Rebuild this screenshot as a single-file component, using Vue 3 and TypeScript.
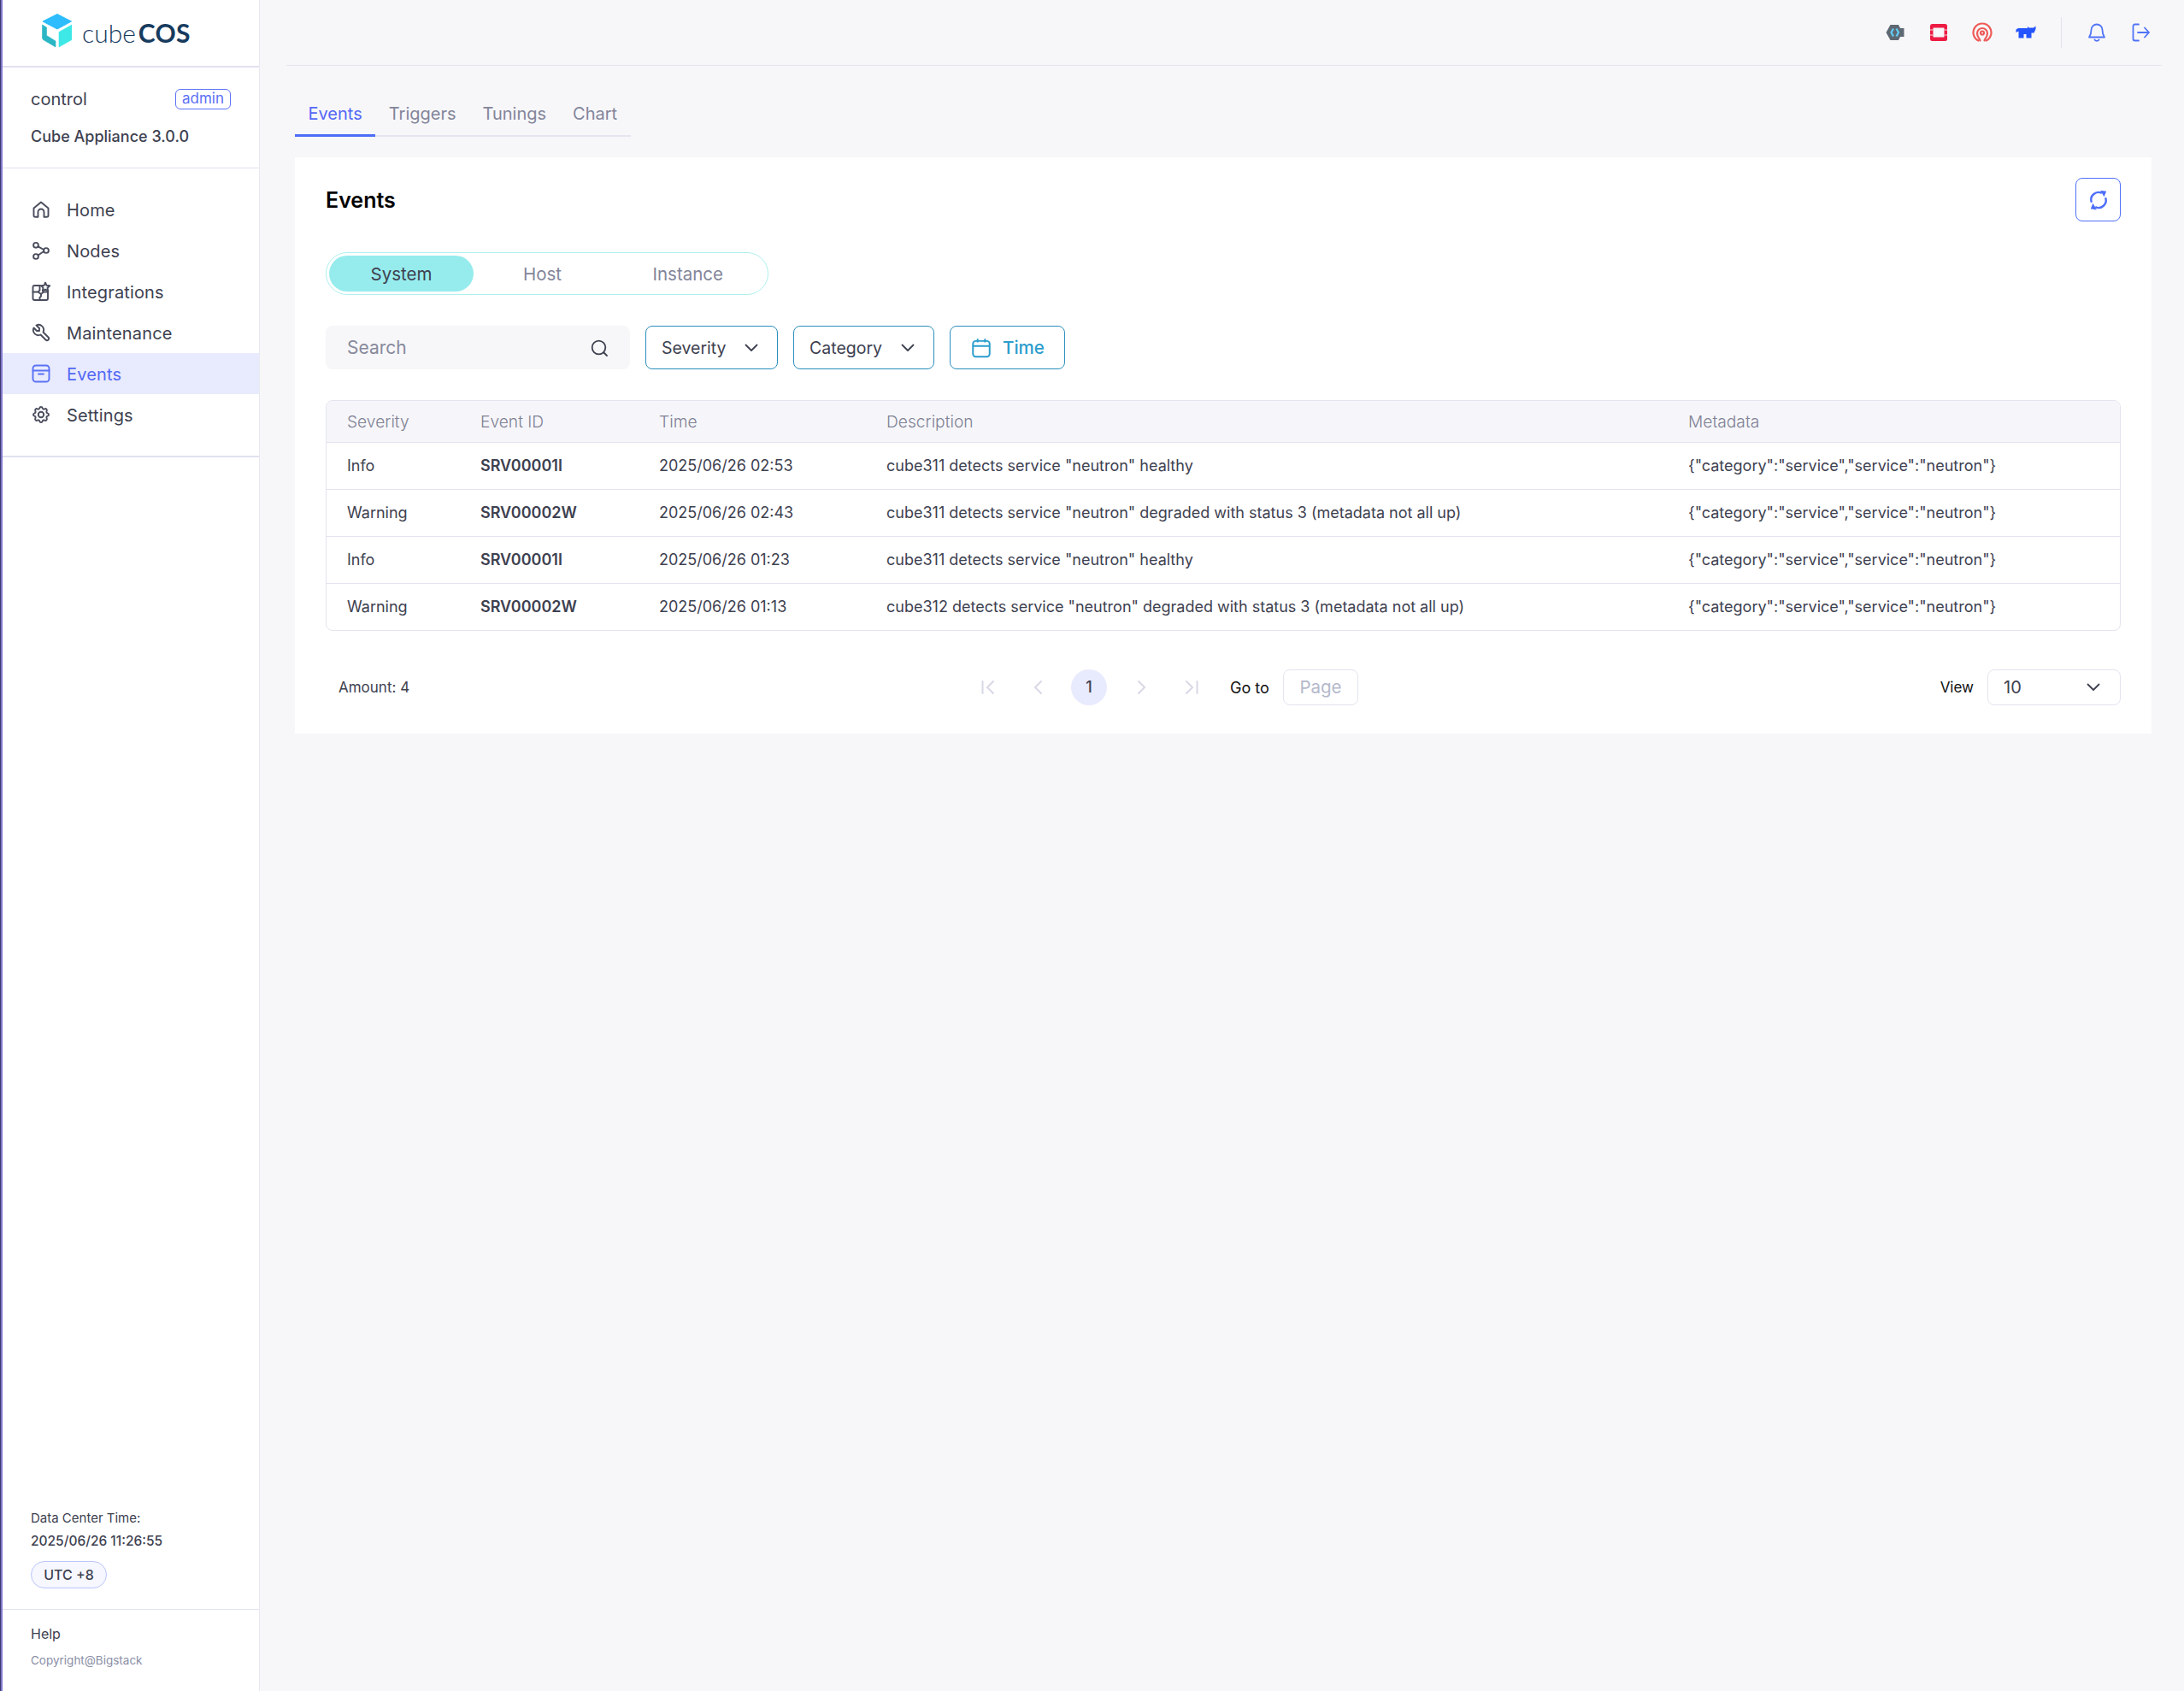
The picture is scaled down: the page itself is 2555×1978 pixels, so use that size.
<script setup lang="ts">
interface Row { severity: string; id: string; time: string; description: string }
const navItems = ['Home', 'Nodes', 'Integrations', 'Maintenance', 'Events', 'Settings']
const tabs = ['Events', 'Triggers', 'Tunings', 'Chart']
const segments = ['System', 'Host', 'Instance']
const metadata = '{"category":"service","service":"neutron"}'
const rows: Row[] = [
  { severity: 'Info', id: 'SRV00001I', time: '2025/06/26 02:53', description: 'cube311 detects service "neutron" healthy' },
  { severity: 'Warning', id: 'SRV00002W', time: '2025/06/26 02:43', description: 'cube311 detects service "neutron" degraded with status 3 (metadata not all up)' },
  { severity: 'Info', id: 'SRV00001I', time: '2025/06/26 01:23', description: 'cube311 detects service "neutron" healthy' },
  { severity: 'Warning', id: 'SRV00002W', time: '2025/06/26 01:13', description: 'cube312 detects service "neutron" degraded with status 3 (metadata not all up)' },
]
</script>

<template>
  <div class="shell">
    <aside class="sidebar">
      <div class="logo">
        <svg class="cube" viewBox="49 17 35 39" width="35" height="39">
          <path d="M67 17.500 83.500 26 67 35 50 26Z" fill="#2dbcfe" stroke="#2dbcfe" stroke-linejoin="round" />
          <path d="M49.500 30 54.500 33V42.500L65 49V56L50.500 47.500 49.500 46Z" fill="#2bb6c4" stroke="#2bb6c4" stroke-width=".6" stroke-linejoin="round" />
          <path d="M84 30 69 38.500V56L84 47.500Z" fill="#3de8e6" stroke="#3de8e6" stroke-width=".6" stroke-linejoin="round" />
        </svg>
        <span class="brand"><span class="brand-light">cube</span><span class="brand-bold">COS</span></span>
      </div>

      <div class="user">
        <div class="user-row">
          <span class="user-name">control</span>
          <span class="badge">admin</span>
        </div>
        <div class="version">Cube Appliance 3.0.0</div>
      </div>

      <nav class="nav">
        <a v-for="item in navItems" :key="item" class="nav-item" :class="{ active: item === 'Events' }">
          <svg class="nav-icon" viewBox="0 0 24 24">
            <template v-if="item === 'Home'">
              <path d="M3.500 10.500 12 3.500l8.500 7V19a1.800 1.800 0 0 1-1.800 1.800h-3.200V15a3.500 3.500 0 0 0-7 0v5.800H5.300A1.800 1.800 0 0 1 3.500 19Z" />
            </template>
            <template v-else-if="item === 'Nodes'">
              <circle cx="6" cy="5.800" r="2.900" /><circle cx="18" cy="12" r="2.900" /><circle cx="6" cy="19" r="2.900" />
              <path d="M8.600 7.300 15.200 11M15.300 13 8.600 17.500" />
            </template>
            <template v-else-if="item === 'Integrations'">
              <path d="M11 5H4.500a2 2 0 0 0-2 2v13a2 2 0 0 0 2 2H18a2 2 0 0 0 2-2v-7" />
              <path d="M10.500 5v5.500l-2 2H2.500M8.500 12.500l3.500 2.500v2.500l-1.500 1.500v3M12 15l3-2.500h5" />
              <path d="m17 1.500 1.500 3.300 3.700.4-2.700 2.500.7 3.600-3.200-1.800-3.200 1.800.7-3.600L12 5.200l3.600-.4Z" />
            </template>
            <template v-else-if="item === 'Maintenance'">
              <path d="M7 10h3V7L6.500 3.500a6 6 0 0 1 8 8l6 6a2 2 0 0 1-3 3l-6-6a6 6 0 0 1-8-8L7 10" />
            </template>
            <template v-else-if="item === 'Events'">
              <rect x="2.500" y="2.500" width="19" height="19" rx="3.500" />
              <path d="M2.500 8.500h19M9 12.500h6" />
            </template>
            <template v-else>
              <path d="M10.325 4.317c.426-1.756 2.924-1.756 3.350 0a1.724 1.724 0 0 0 2.573 1.066c1.543-.94 3.310.826 2.370 2.370a1.724 1.724 0 0 0 1.065 2.572c1.756.426 1.756 2.924 0 3.350a1.724 1.724 0 0 0-1.066 2.573c.94 1.543-.826 3.310-2.370 2.370a1.724 1.724 0 0 0-2.572 1.065c-.426 1.756-2.924 1.756-3.350 0a1.724 1.724 0 0 0-2.573-1.066c-1.543.94-3.310-.826-2.370-2.370a1.724 1.724 0 0 0-1.065-2.572c-1.756-.426-1.756-2.924 0-3.350a1.724 1.724 0 0 0 1.066-2.573c-.94-1.543.826-3.310 2.370-2.370 1 .608 2.296.07 2.572-1.065Z" />
              <circle cx="12" cy="12" r="3.200" />
            </template>
          </svg>
          <span class="nav-label">{{ item }}</span>
        </a>
      </nav>

      <div class="spacer"></div>

      <div class="clock">
        <div class="clock-label">Data Center Time:</div>
        <div class="clock-value">2025/06/26 11:26:55</div>
        <span class="utc">UTC +8</span>
      </div>
      <div class="help">
        <div class="help-link">Help</div>
        <div class="copyright">Copyright@Bigstack</div>
      </div>
    </aside>

    <main class="main">
      <header class="topbar">
        <div class="top-icons">
          <svg class="top-icon" viewBox="0 0 24 24">
            <path d="M1.500 12 6.500 3h9.500L18 7h4.500v10H18l-2 4H6.500Z" fill="#5e6872" />
            <path d="M10 7.500 7.500 12l2.500 4.500M13.500 7.500 16 12l-2.500 4.500" fill="none" stroke="#62ccf6" stroke-width="2.200" />
          </svg>
          <svg class="top-icon" viewBox="0 0 24 24">
            <rect x="2" y="2" width="20" height="20" rx="2.500" fill="#ed1c44" />
            <rect x="5.500" y="6.500" width="13" height="11" rx=".5" fill="#f7f7f9" />
            <path d="M2 9h3.500M2 15h3.500M18.500 9H22M18.500 15H22" stroke="#f9d5dc" stroke-width="1.200" />
          </svg>
          <svg class="top-icon" viewBox="0 0 24 24" fill="none" stroke="#ee5a58" stroke-width="2.200" stroke-linecap="round">
            <path d="M7.500 21.500a10.500 10.500 0 1 1 9 0" />
            <path d="M9.500 21.500c0-2-3.500-3.500-3.500-8.500a6 6 0 0 1 12 0c0 5-3.500 6.500-3.500 8.500" />
            <circle cx="12" cy="12.500" r="2" />
          </svg>
          <svg class="top-icon" viewBox="0 -4 24 24">
            <path d="M.500 4.500 3 3H14V.800L15.500 2.500H21L23.500.500V4L21.500 8.500H18.500V14.500H12.500V10H9.500V14.500H3.500V6.500L.500 8Z" fill="#2453ff" />
          </svg>
        </div>
        <span class="top-divider"></span>
        <div class="top-icons">
          <svg class="top-icon line" viewBox="0 0 24 24">
            <path d="M12 2.500a6.500 6.500 0 0 1 6.500 6.500c0 5 1 6.500 2.500 8.500H3c1.500-2 2.500-3.500 2.500-8.500A6.500 6.500 0 0 1 12 2.500Z" />
            <path d="M9.500 20.500a3 3 0 0 0 5 0" />
          </svg>
          <svg class="top-icon line" viewBox="0 0 24 24">
            <path d="M10 2.500H5.500a2 2 0 0 0-2 2v15a2 2 0 0 0 2 2H10M9 12h13M17 6.500l5 5.500-5 5.500" />
          </svg>
        </div>
      </header>

      <div class="content">
        <div class="tabs">
          <span v-for="tab in tabs" :key="tab" class="tab" :class="{ active: tab === 'Events' }">{{ tab }}</span>
        </div>

        <section class="card">
          <div class="card-head">
            <h1 class="title">Events</h1>
            <button class="refresh">
              <svg viewBox="0 0 24 24" width="26" height="26">
                <path d="M4.500 14.500A8 8 0 0 1 15.500 4.500M19.500 9.500A8 8 0 0 1 8.500 19.500" fill="none" stroke="#4d6ef8" stroke-width="2.200" />
                <path d="M14 1.500 20.500 2.500 18 8.500ZM10 22.500 3.500 21.500 6 15.500Z" fill="#4d6ef8" />
              </svg>
            </button>
          </div>

          <div class="segmented">
            <span v-for="seg in segments" :key="seg" class="segment" :class="{ active: seg === 'System' }">{{ seg }}</span>
          </div>

          <div class="filters">
            <div class="search">
              <span class="search-text">Search</span>
              <svg viewBox="0 0 24 24" width="24" height="24" fill="none" stroke="#3d4150" stroke-width="1.800" stroke-linecap="round">
                <circle cx="11.500" cy="11.500" r="7.800" /><path d="m17.500 17.500 3.500 3.500" />
              </svg>
            </div>
            <button class="filter severity">
              <span>Severity</span>
              <svg class="chev" viewBox="0 0 16 10"><path d="M1.500 1.500 8 8l6.500-6.500" /></svg>
            </button>
            <button class="filter category">
              <span>Category</span>
              <svg class="chev" viewBox="0 0 16 10"><path d="M1.500 1.500 8 8l6.500-6.500" /></svg>
            </button>
            <button class="filter time">
              <svg class="cal" viewBox="0 0 24 24" width="26" height="26" fill="none" stroke="#2b9dcd" stroke-width="1.800">
                <rect x="3" y="4.500" width="18" height="17" rx="3" /><path d="M3 10h18M8 2v4M16 2v4" />
              </svg>
              <span>Time</span>
            </button>
          </div>

          <div class="table">
            <div class="tr th">
              <span>Severity</span><span>Event ID</span><span>Time</span><span>Description</span><span>Metadata</span>
            </div>
            <div v-for="(row, i) in rows" :key="i" class="tr td">
              <span>{{ row.severity }}</span>
              <span class="strong">{{ row.id }}</span>
              <span>{{ row.time }}</span>
              <span>{{ row.description }}</span>
              <span>{{ metadata }}</span>
            </div>
          </div>

          <div class="pager">
            <span class="amount">Amount: 4</span>
            <div class="pages">
              <svg class="pg pg-first" viewBox="0 0 16 18"><path d="M1.500 2v14M14 2 7 9l7 7" /></svg>
              <svg class="pg pg-prev" viewBox="0 0 10 18"><path d="M9 2 2 9l7 7" /></svg>
              <span class="page-no">1</span>
              <svg class="pg pg-next" viewBox="0 0 10 18"><path d="m1 2 7 7-7 7" /></svg>
              <svg class="pg pg-last" viewBox="0 0 16 18"><path d="M14.500 2v14M2 2l7 7-7 7" /></svg>
              <span class="goto">Go to</span>
              <span class="page-input">Page</span>
            </div>
            <div class="view">
              <span class="view-label">View</span>
              <div class="view-select">
                <span>10</span>
                <svg class="chev" viewBox="0 0 16 10"><path d="M1.500 1.500 8 8l6.500-6.500" /></svg>
              </div>
            </div>
          </div>
        </section>
      </div>
    </main>
  </div>
</template>

<style>
html, body { margin: 0; background: #f7f7f9; }
</style>

<style scoped>
.shell {
  display: flex;
  min-height: 1978px;
  background: #f7f7f9;
  font-family: Inter, "Noto Sans", sans-serif;
  color: #3e4150;
}

/* sidebar */
.sidebar {
  box-sizing: border-box;
  width: 304px;
  flex: none;
  display: flex;
  flex-direction: column;
  background: #fff;
  border-left: 1px solid #3c3a6e;
  border-right: 1px solid #e8e8f0;
  padding-left: 2px;
  box-shadow: inset 2px 0 0 #8278cc;
}
.logo {
  box-sizing: border-box;
  height: 79px;
  display: flex;
  align-items: center;
  gap: 12px;
  padding: 0 0 6px 46px;
  border-bottom: 2px solid #e1e2f0;
}
.cube { flex: none; }
.brand { font-family: Lato, sans-serif; font-size: 30px; color: #173b5e; line-height: 1; margin-top: 4px; }
.brand-light { font-weight: 300; margin-right: 3px; }
.brand-bold { font-weight: 700; letter-spacing: .3px; }

.user {
  box-sizing: border-box;
  height: 118px;
  padding: 25px 33px 0 33px;
  border-bottom: 1px solid #e1e2f0;
}
.user-row { display: flex; align-items: center; justify-content: space-between; height: 24px; }
.user-name { font-size: 20px; font-weight: 400; line-height: 26px; }
.badge {
  box-sizing: border-box;
  height: 24px;
  line-height: 21px;
  padding: 0 7px;
  border: 1px solid #5b72f5;
  border-radius: 6px;
  font-size: 17px;
  color: #5b6ff6;
}
.version { margin-top: 20px; font-size: 18px; font-weight: 500; line-height: 24px; }

.nav { padding: 24px 0; border-bottom: 2px solid #e1e2f0; }
.nav-item {
  display: flex;
  align-items: center;
  height: 48px;
  padding-left: 33px;
  gap: 18px;
  font-size: 20px;
}
.nav-label { padding-top: 1px; letter-spacing: .15px; }
.nav-icon {
  width: 24px;
  height: 24px;
  fill: none;
  stroke: #494c5c;
  stroke-width: 1.900;
  stroke-linecap: round;
  stroke-linejoin: round;
}
.nav-item.active { background: #e8eafd; color: #5468f5; }
.nav-item.active .nav-icon { stroke: #5a72f6; }
.spacer { flex: 1; }

.clock { padding: 0 33px 24px; border-bottom: 1px solid #e1e2f0; }
.clock-label { font-size: 15px; line-height: 25px; }
.clock-value { margin-top: 3px; font-size: 15.500px; font-weight: 500; line-height: 24px; }
.utc {
  box-sizing: border-box;
  display: inline-block;
  margin-top: 11px;
  width: 89px;
  height: 32px;
  line-height: 30px;
  text-align: center;
  border: 1px solid #bcc6fa;
  border-radius: 16px;
  background: #f6f7ff;
  font-size: 16px;
  font-weight: 500;
  vertical-align: top;
}
.help { padding: 16px 33px 0; height: 95px; box-sizing: border-box; }
.help-link { font-size: 16px; line-height: 24px; }
.copyright { margin-top: 8px; font-size: 13.500px; line-height: 22px; color: #8b8fa6; }

/* main */
.main { flex: 1; min-width: 0; }
.topbar {
  box-sizing: border-box;
  height: 77px;
  margin: 0 26px 0 31px;
  padding-right: 13px;
  display: flex;
  justify-content: flex-end;
  align-items: center;
  gap: 29px;
  border-bottom: 1px solid #e5e5f1;
}
.top-icons { display: flex; align-items: center; gap: 27px; }
.top-icon { width: 24px; height: 24px; display: block; }
.top-icon.line {
  fill: none;
  stroke: #5073f7;
  stroke-width: 1.800;
  stroke-linecap: round;
  stroke-linejoin: round;
}
.top-divider { width: 1px; height: 36px; background: #e3e3ec; }

.content { padding: 29px 38px 0 41px; }
.tabs { display: inline-flex; vertical-align: top; border-bottom: 2px solid #e5e5f1; }
.tab {
  box-sizing: border-box;
  height: 54px;
  padding: 0 15.500px;
  margin-bottom: -2px;
  line-height: 54px;
  font-size: 20px;
  color: #83859a;
  border-bottom: 3px solid transparent;
}
.tab.active { color: #5468f5; border-bottom-color: #4d6cf8; }

.card {
  margin-top: 24px;
  padding: 24px 36px 33px;
  background: #fff;
}
.card-head { display: flex; justify-content: space-between; align-items: center; }
.title { margin: 0; font-size: 25px; font-weight: 600; color: #000; }
.refresh {
  box-sizing: border-box;
  width: 53px;
  height: 51px;
  display: flex;
  align-items: center;
  justify-content: center;
  padding: 0;
  background: #fff;
  border: 1px solid #4f70f8;
  border-radius: 8px;
}

.segmented {
  box-sizing: border-box;
  display: flex;
  gap: 9.500px;
  width: 518px;
  height: 50px;
  margin-top: 36px;
  padding: 3px;
  border: 1px solid #aef0ee;
  border-radius: 25px;
}
.segment {
  padding: 0 48.500px;
  line-height: 43px;
  text-align: center;
  font-size: 20.500px;
  color: #83859a;
  border-radius: 21px;
}
.segment.active { background: #96eced; color: #3e4150; }

.filters { display: flex; gap: 18px; margin-top: 36px; height: 51px; }
.search {
  box-sizing: border-box;
  width: 356px;
  display: flex;
  align-items: center;
  justify-content: space-between;
  padding: 0 24px 0 25px;
  background: #f7f7f9;
  border-radius: 8px;
}
.search-text { font-size: 21px; color: #878a9c; }
.filter {
  box-sizing: border-box;
  display: flex;
  align-items: center;
  padding: 0 22px 0 18px;
  background: #fff;
  border: 1px solid #2b8fbd;
  border-radius: 8px;
  font-family: inherit;
  font-size: 19.500px;
  color: #3e4150;
}
.filter.severity { width: 155px; justify-content: space-between; }
.filter.category { width: 165px; justify-content: space-between; }
.filter.time { width: 135px; gap: 12px; padding: 0 0 0 23px; font-size: 20.500px; color: #2b9dcd; font-weight: 500; }
.cal { flex: none; }
.chev {
  width: 16px;
  height: 10px;
  fill: none;
  stroke: #3e4150;
  stroke-width: 1.800;
  stroke-linecap: round;
  stroke-linejoin: round;
  flex: none;
}

.table {
  margin-top: 36px;
  border: 1px solid #e3e4ef;
  border-radius: 8px;
  overflow: hidden;
}
.tr {
  display: grid;
  grid-template-columns: 156px 209px 266px 938px 1fr;
  align-items: center;
  padding-left: 24px;
}
.th {
  height: 48px;
  background: #f6f6fa;
  font-size: 19.200px;
  font-weight: 300;
  color: #7f8194;
}
.td {
  box-sizing: border-box;
  height: 55px;
  padding-bottom: 1px;
  border-top: 1px solid #e3e4ef;
  font-size: 18px;
}
.strong { font-weight: 600; }

.pager {
  display: grid;
  grid-template-columns: 767px 441px 1fr;
  align-items: center;
  height: 42px;
  margin-top: 45px;
}
.amount { padding-left: 15px; font-size: 17px; }
.pages { display: flex; align-items: center; height: 42px; }
.pg {
  display: block;
  height: 18px;
  fill: none;
  stroke: #d8d9e6;
  stroke-width: 2;
  stroke-linecap: round;
  stroke-linejoin: round;
  flex: none;
}
.pg-first { width: 16px; margin-right: 45px; }
.pg-prev { width: 10px; margin-right: 34px; }
.pg-next { width: 10px; margin-left: 36px; }
.pg-last { width: 16px; margin-left: 45px; }
.page-no {
  width: 42px;
  height: 42px;
  line-height: 42px;
  text-align: center;
  border-radius: 50%;
  background: #e8eafd;
  font-size: 18px;
  font-weight: 500;
}
.goto { margin-left: 37px; font-size: 18px; color: #111; }
.page-input {
  box-sizing: border-box;
  width: 88px;
  height: 42px;
  margin-left: auto;
  line-height: 40px;
  text-align: center;
  border: 1px solid #e3e4ef;
  border-radius: 8px;
  font-size: 20.500px;
  color: #b4b8cb;
}
.view { display: flex; justify-content: flex-end; align-items: center; gap: 16px; }
.view-label { font-size: 17px; color: #111; }
.view-select {
  box-sizing: border-box;
  width: 156px;
  height: 42px;
  display: flex;
  align-items: center;
  justify-content: space-between;
  padding: 0 23px 0 18px;
  border: 1px solid #e3e4ef;
  border-radius: 8px;
  font-size: 20px;
}
</style>
